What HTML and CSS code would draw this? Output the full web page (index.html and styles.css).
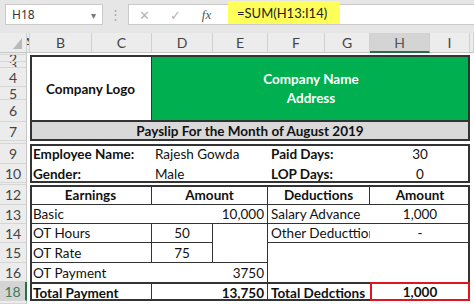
FILE: index.html
```html
<!DOCTYPE html>
<html>
<head>
	<title>Payslip</title>
	<link rel="stylesheet" href="styles.css">
</head>
<body>
	<div class="formula-bar">
		<div class="name-box"><span>H18</span><span class="drop">&#9662;</span></div>
		<div class="grip">&#8942;</div>
		<div class="formula">
			<span class="fx-btn">&#10005;</span>
			<span class="fx-btn">&#10003;</span>
			<span class="fx-btn fx">fx</span>
			<span class="input">=SUM(H13:I14)</span>
		</div>
	</div>

	<div class="sheet">
		<!-- headers -->
		<div class="corner"><svg width="9" height="11" viewBox="0 0 9 11"><polygon points="9,0 9,11 0,11" fill="#b9b9b9"/></svg></div>
		<div class="col-head col-a">A</div>
		<div class="col-head">B</div>
		<div class="col-head">C</div>
		<div class="col-head">D</div>
		<div class="col-head">E</div>
		<div class="col-head">F</div>
		<div class="col-head">G</div>
		<div class="col-head selected">H</div>
		<div class="col-head">I</div>
		<div class="col-head"></div>

		<div class="row-head"></div>
		<div class="row-head">2</div>
		<div class="row-head">3</div>
		<div class="row-head">4</div>
		<div class="row-head">5</div>
		<div class="row-head">6</div>
		<div class="row-head">7</div>
		<div class="row-head"></div>
		<div class="row-head">9</div>
		<div class="row-head">10</div>
		<div class="row-head"></div>
		<div class="row-head">12</div>
		<div class="row-head">13</div>
		<div class="row-head">14</div>
		<div class="row-head">15</div>
		<div class="row-head">16</div>
		<div class="row-head selected">18</div>
		<div class="row-head"></div>

		<!-- company -->
		<div class="cell bc r2-6 center bold line-r">Company Logo</div>
		<div class="cell di r2-6 company">Company Name<br>Address</div>
		<div class="frame bi r2-6"></div>
		<div class="cell bi r7 title center bold">Payslip For the Month of August 2019</div>

		<!-- employee -->
		<div class="cell bc r9 bold">Employee Name:</div>
		<div class="cell de r9">Rajesh Gowda</div>
		<div class="cell fg r9 bold">Paid Days:</div>
		<div class="cell hi r9 center">30</div>
		<div class="cell bc r10 bold">Gender:</div>
		<div class="cell de r10">Male</div>
		<div class="cell fg r10 bold">LOP Days:</div>
		<div class="cell hi r10 center">0</div>
		<div class="frame bi r9-10"></div>

		<!-- earnings / deductions -->
		<div class="cell bc r12 center bold line-r line-b">Earnings</div>
		<div class="cell de r12 center bold line-r line-b">Amount</div>
		<div class="cell fg r12 center bold line-r line-b">Deductions</div>
		<div class="cell hi r12 center bold line-b">Amount</div>

		<div class="cell bd r13 line-b">Basic</div>
		<div class="cell e r13 right line-r line-b">10,000</div>
		<div class="cell fg r13 line-b">Salary Advance</div>
		<div class="cell hi r13 center line-b">1,000</div>

		<div class="cell bc r14 line-r line-b">OT Hours</div>
		<div class="cell d r14 center line-r line-b">50</div>
		<div class="cell e r14-15 line-r line-b"></div>
		<div class="cell fg r14 line-b">Other Deducttions</div>
		<div class="cell hi r14 center line-b">-</div>

		<div class="cell bc r15 line-r line-b">OT Rate</div>
		<div class="cell d r15 center line-r line-b">75</div>
		<div class="cell fi r15-16"></div>

		<div class="cell bd r16">OT Payment</div>
		<div class="cell e r16 right line-r">3750</div>

		<div class="cell bc r18 bold line-r total">Total Payment</div>
		<div class="cell de r18 right bold line-r total">13,750</div>
		<div class="cell fg r18 bold total">Total Dedctions</div>
		<div class="frame bi r12-18"></div>
		<div class="cell hi r18 center bold active">1,000</div>
	</div>
</body>
</html>
```

FILE: styles.css
```css
/* general */
* {
	box-sizing: border-box;
}
body {
	margin: 0;
	width: 474px;
	height: 304px;
	overflow: hidden;
	background: #fff;
	font-family: Lato, "Liberation Sans", sans-serif;
}

/* formula bar */
.formula-bar {
	height: 33px;
	display: flex;
	align-items: flex-start;
	padding: 4px 0 0 5px;
	background: #e6e6e6;
	font-size: 13px;
	color: #333;
}
.name-box {
	width: 98px;
	height: 21px;
	display: flex;
	align-items: center;
	justify-content: space-between;
	padding: 0 6px 0 6px;
	background: #fff;
	border: 1px solid #cacaca;
	font-family: "Noto Sans", sans-serif;
	font-size: 12px;
}
.drop {
	font-size: 10px;
	color: #777;
}
.grip {
	width: 25px;
	line-height: 21px;
	text-align: center;
	color: #aaa;
}
.formula {
	flex: 1;
	height: 21px;
	display: flex;
	align-items: center;
	background: #fff;
	border: 1px solid #cacaca;
	border-right: 0;
}
.fx-btn {
	width: 31px;
	text-align: center;
	color: #b5b5b5;
	font-size: 13px;
}
.fx-btn.fx {
	font-family: "Liberation Serif", serif;
	font-style: italic;
	color: #555;
}
.input {
	align-self: flex-start;
	height: 23px;
	margin: -4px 0 0 6px;
	padding: 4px 13px 0 9px;
	background: #ffff5a;
	font-size: 13px;
	color: #222;
}

/* sheet grid */
.sheet {
	display: grid;
	grid-template-columns: 27px 3px 62px 60px 61px 55px 57px 45px 60px 40px 4px;
	grid-template-rows: 20px 2px 7px 6px 19px 13px 22px 19px 3px 20px 19px 2px 20px 19px 19px 20px 19px 19px 3px;
	font-size: 13.5px;
	color: #111;
}
.corner {
	grid-row: 1;
	grid-column: 1;
	display: flex;
	align-items: flex-end;
	justify-content: flex-end;
	padding: 0 4px 3px 0;
	background: #ececec;
	border-right: 1px solid #d0d0d0;
	border-bottom: 1px solid #c6c6c6;
}
.col-head {
	grid-row: 1;
	display: flex;
	align-items: center;
	justify-content: center;
	overflow: hidden;
	background: #ececec;
	border-right: 1px solid #d0d0d0;
	border-bottom: 1px solid #c6c6c6;
	color: #444;
	font-size: 14px;
}
.col-head.col-a {
	justify-content: flex-start;
	text-indent: -4px;
}
.col-head.selected {
	background: #d4d4d4;
	border-bottom: 2px solid #217346;
	color: #555;
}
.row-head {
	grid-column: 1;
	display: flex;
	align-items: center;
	justify-content: center;
	overflow: hidden;
	background: #ececec;
	border-right: 1px solid #c6c6c6;
	border-bottom: 1px solid #d6d6d6;
	color: #444;
	font-size: 14px;
}
.row-head.selected {
	background: #d4d4d4;
	border-right: 2px solid #217346;
	color: #3b7a5a;
}

/* columns */
.bc { grid-column: 3 / 5; }
.bd { grid-column: 3 / 6; }
.bi { grid-column: 3 / 11; }
.d { grid-column: 5 / 6; }
.de { grid-column: 5 / 7; }
.di { grid-column: 5 / 11; }
.e { grid-column: 6 / 7; }
.fg { grid-column: 7 / 9; }
.fi { grid-column: 7 / 11; }
.hi { grid-column: 9 / 11; }

/* rows */
.r2-6 { grid-row: 3 / 8; }
.r7 { grid-row: 8 / 9; }
.r9 { grid-row: 10 / 11; }
.r10 { grid-row: 11 / 12; }
.r9-10 { grid-row: 10 / 12; }
.r12 { grid-row: 13 / 14; }
.r13 { grid-row: 14 / 15; }
.r14 { grid-row: 15 / 16; }
.r14-15 { grid-row: 15 / 17; }
.r15 { grid-row: 16 / 17; }
.r15-16 { grid-row: 16 / 18; }
.r16 { grid-row: 17 / 18; }
.r18 { grid-row: 18 / 19; }
.r12-18 { grid-row: 13 / 19; }

/* cells */
.cell {
	display: flex;
	align-items: center;
	padding: 0 3px;
	white-space: nowrap;
	overflow: hidden;
	background: #fff;
}
.center { justify-content: center; }
.right { justify-content: flex-end; }
.bold { font-weight: bold; }
.line-r { border-right: 1px solid #333; }
.line-b { border-bottom: 1px solid #333; }
.frame {
	border: 2px solid #333;
}
.company {
	flex-direction: column;
	justify-content: center;
	text-align: center;
	line-height: 19px;
	background: #00b050;
	color: #fff;
	font-weight: bold;
}
.title {
	background: #d9d9d9;
	border: 2px solid #333;
	border-top: 0;
}
.total {
	border-top: 2px solid #333;
}
.active {
	z-index: 1;
	border: 2px solid #e0161e;
}
```
